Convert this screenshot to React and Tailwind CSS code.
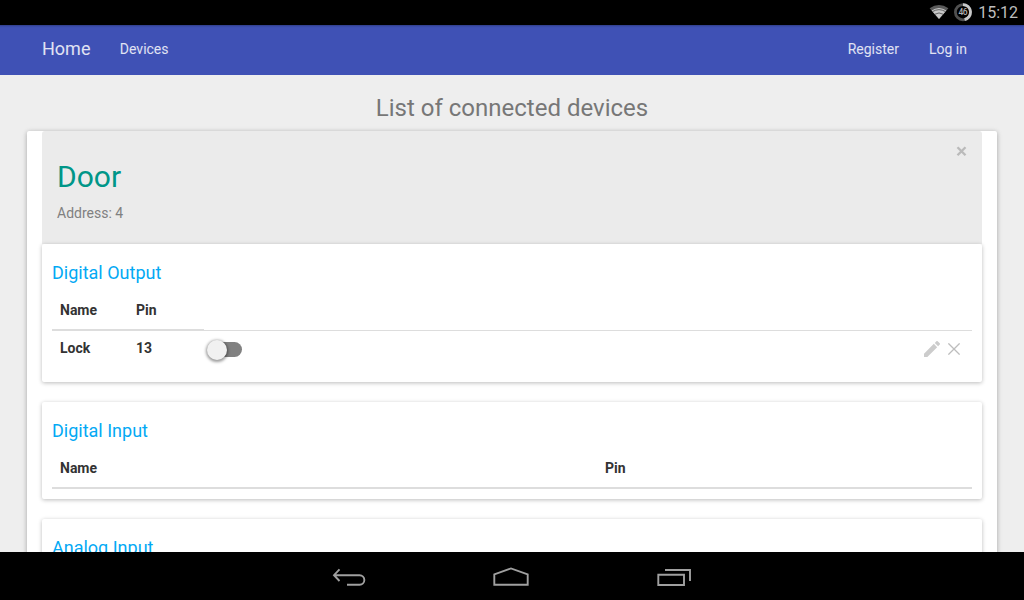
import React from "react";

const CARD_SHADOW = "shadow-[0_1px_4px_rgba(0,0,0,0.27)]";

function StatusBar() {
  return (
    <div className="flex h-[25px] shrink-0 items-center justify-end bg-black pr-[6px]">
      <svg className="mr-[5px] h-[25px] w-[20px]" viewBox="0 0 20 25">
        <path d="M0.6 8.2Q10 1.6 19.4 8.2L10 19Z" fill="#5a5a5a" />
        <path d="M2.6 10.4Q10 5.4 17.4 10.4L10 19Z" fill="#c8c8c8" />
        <path d="M3.4 11.7Q10 7.6 16.6 11.7M5.6 14.3Q10 11.6 14.4 14.3" fill="none" stroke="#333333" strokeWidth="0.7" />
      </svg>
      <svg className="mr-[6px] h-[25px] w-[18px]" viewBox="0 0 18 25">
        <circle cx="9" cy="12.2" r="7.6" fill="none" stroke="#505050" strokeWidth="2.8" />
        <path d="M9 4.6A7.6 7.6 0 0 1 10.6 19.6" fill="none" stroke="#c8c8c8" strokeWidth="2.8" />
        <text x="8.8" y="15.4" textAnchor="middle" fontFamily="Roboto, sans-serif" fontSize="8.5" fontWeight="500" letterSpacing="-0.6" fill="#b0b0b0">46</text>
      </svg>
      <span className="text-[16px] leading-[25px] text-[#bebebe]">15:12</span>
    </div>
  );
}

function NavBar() {
  return (
    <nav className="flex h-[50px] shrink-0 items-center bg-[#3f51b5] pr-[57px] pb-[2px] pl-[42px] text-[14px] leading-5 text-white/84 shadow-[inset_0_3px_2px_-2px_rgba(0,0,0,0.25)]">
      <a className="text-[18px]">Home</a>
      <a className="ml-[29.4px]">Devices</a>
      <a className="ml-auto">Register</a>
      <a className="ml-[30px]">Log in</a>
    </nav>
  );
}

function Card({ title, className, children }) {
  return (
    <section className={"relative rounded-[2px] bg-white px-[10px] pt-[19px] " + CARD_SHADOW + " " + className}>
      <h4 className="text-[18px] leading-[20px] text-[#03a9f4]">{title}</h4>
      {children}
    </section>
  );
}

function Toggle() {
  return (
    <div className="ml-[2.5px] flex h-[21px] w-[36px] items-center">
      <div className="z-10 h-[20px] w-[20px] rounded-full bg-[#f1f1f1] shadow-[0_1px_3px_1px_rgba(0,0,0,0.4)]" />
      <div className="-ml-[18.5px] h-[15px] w-[34px] rounded-full bg-[#818181]" />
    </div>
  );
}

function SystemBar() {
  return (
    <div className="z-10 flex h-12 shrink-0 items-center justify-center gap-[114px] bg-black pr-[2px]">
      <svg className="h-12 w-[48px]" viewBox="325 552 48 48" fill="none" stroke="#a0a0a0" strokeWidth="1.9">
        <path d="M339.5 569.3L334 575.2L339.5 581M334 575.2H359.6A4.7 4.7 0 0 1 359.6 584.7H347" />
      </svg>
      <svg className="h-12 w-[48px]" viewBox="487 552 48 48" fill="none" stroke="#a0a0a0" strokeWidth="1.9">
        <path d="M494.3 584.8V574.4L511 568.4L527.7 574.4V584.8Z" />
      </svg>
      <svg className="h-12 w-[48px]" viewBox="649 552 48 48" fill="none" stroke="#a0a0a0" strokeWidth="1.9">
        <path d="M658.3 574.8H684V585H658.3ZM665 570H690V581" />
      </svg>
    </div>
  );
}

export default function App() {
  return (
    <div className="flex h-[600px] w-[1024px] flex-col overflow-hidden bg-[#eeeeee] font-[Roboto,sans-serif] text-[14px]">
      <StatusBar />
      <NavBar />
      <main className="min-h-0 flex-1 overflow-hidden px-[27px]">
        <h1 className="pt-[20px] pb-[10px] text-center text-[24px] leading-[26px] text-[#777777]">List of connected devices</h1>
        <div className="h-[600px] rounded-[2px] bg-white px-[15px] shadow-[0_1px_6px_rgba(0,0,0,0.12),0_1px_4px_rgba(0,0,0,0.2)]">
          <header className="flex h-[113px] items-start justify-between rounded-t-[3px] bg-[#ebebeb] pr-[15px] pl-[15px]">
            <div>
              <h2 className="mt-[29px] text-[30px] leading-[34px] text-[#009688]">Door</h2>
              <p className="mt-[9px] leading-5 text-[#808080]">Address: 4</p>
            </div>
            <svg className="mt-[15px] h-[11px] w-[11px]" viewBox="0 0 11 11">
              <path d="M1.5 1.3L9.5 9.3M9.5 1.3L1.5 9.3" stroke="#bababa" strokeWidth="2.3" />
            </svg>
          </header>

          <Card title="Digital Output" className="h-[138px]">
            <div className="mt-[8px] grid grid-cols-[76px_76px_1fr] font-bold leading-5 text-[#333333]">
              <div className="h-[40px] border-b-2 border-[#dddddd] px-2 pt-[9px]">Name</div>
              <div className="h-[40px] border-b-2 border-[#dddddd] px-2 pt-[9px]">Pin</div>
              <div className="h-[40px] border-b border-[#dddddd]" />
            </div>
            <div className="grid grid-cols-[76px_76px_1fr_auto] font-bold leading-5 text-[#333333]">
              <div className="px-2 pt-[7px]">Lock</div>
              <div className="px-2 pt-[7px]">13</div>
              <div className="pt-[8px]"><Toggle /></div>
              <div className="flex items-start gap-[7.5px] pt-[10px] pr-[12.5px]">
                <svg className="h-4 w-4" viewBox="3 3 18 18" fill="#cccccc">
                  <path d="M3 17.25V21h3.75L17.81 9.94l-3.75-3.75L3 17.25zM20.71 7.04a1 1 0 0 0 0-1.41l-2.34-2.34a1 1 0 0 0-1.41 0l-1.83 1.83 3.75 3.75 1.83-1.83z" />
                </svg>
                <svg className="mt-[2px] h-3 w-3" viewBox="0 0 12 12">
                  <path d="M0.4 0.4L11.6 11.6M11.6 0.4L0.4 11.6" stroke="#bdbdbd" strokeWidth="1.3" />
                </svg>
              </div>
            </div>
          </Card>

          <Card title="Digital Input" className="mt-[20px] h-[97px]">
            <div className="mt-[8px] grid h-[40px] grid-cols-[545px_1fr] border-b-2 border-[#dddddd] pt-[9px] font-bold leading-5 text-[#333333]">
              <div className="px-2">Name</div>
              <div className="px-2">Pin</div>
            </div>
          </Card>

          <Card title="Analog Input" className="mt-[20px] h-[97px]" />
        </div>
      </main>
      <SystemBar />
    </div>
  );
}
